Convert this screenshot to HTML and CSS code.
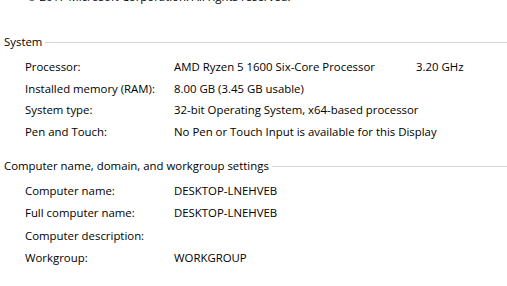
FILE: index.html
```html
<!DOCTYPE html>
<html>
<head>
<meta charset="utf-8">
<link rel="stylesheet" href="styles.css">
</head>
<body>
<div class="copyright">© 2017 Microsoft Corporation. All rights reserved.</div>

<section class="group system">
  <div class="group-head"><span class="group-title">System</span><span class="rule"></span></div>
  <div class="rows">
    <div class="row"><span class="label">Processor:</span><span class="value">AMD Ryzen 5 1600 Six-Core Processor</span><span class="extra">3.20 GHz</span></div>
    <div class="row"><span class="label">Installed memory (RAM):</span><span class="value">8.00 GB (3.45 GB usable)</span></div>
    <div class="row"><span class="label">System type:</span><span class="value">32-bit Operating System, x64-based processor</span></div>
    <div class="row"><span class="label">Pen and Touch:</span><span class="value">No Pen or Touch Input is available for this Display</span></div>
  </div>
</section>

<section class="group computer">
  <div class="group-head"><span class="group-title">Computer name, domain, and workgroup settings</span><span class="rule"></span></div>
  <div class="rows">
    <div class="row"><span class="label">Computer name:</span><span class="value">DESKTOP-LNEHVEB</span></div>
    <div class="row"><span class="label">Full computer name:</span><span class="value">DESKTOP-LNEHVEB</span></div>
    <div class="row"><span class="label">Computer description:</span><span class="value"></span></div>
    <div class="row"><span class="label">Workgroup:</span><span class="value">WORKGROUP</span></div>
  </div>
</section>
</body>
</html>
```

FILE: styles.css
```css
html, body {
  margin: 0;
  padding: 0;
  background: #ffffff;
}
body {
  font-family: "Open Sans", "Noto Sans", sans-serif;
  font-size: 11.4px;
  color: #000000;
  width: 507px;
  height: 286px;
  overflow: hidden;
}
.copyright {
  margin-top: -11px;
  padding-left: 27px;
  height: 16px;
  line-height: 16px;
  white-space: nowrap;
}
.group-head {
  display: flex;
  align-items: center;
  padding-left: 4px;
  height: 16px;
  line-height: 16px;
}
.group-title {
  padding-right: 3px;
  white-space: nowrap;
}
.rule {
  flex: 1;
  height: 1px;
  background: #d5d5d5;
  margin-top: 1px;
}
.system {
  margin-top: 29px;
}
.system .rows {
  margin-top: 9px;
}
.rows {
  padding-left: 25px;
}
.row {
  display: flex;
  height: 21.7px;
  line-height: 16px;
  white-space: nowrap;
}
.computer .row {
  height: 22.5px;
}
.label {
  width: 149px;
  flex: none;
}
.value {
  width: 242px;
  flex: none;
}
.extra {
  flex: none;
}
.computer {
  margin-top: 12px;
}
.computer .rows {
  margin-top: 9px;
}
```
